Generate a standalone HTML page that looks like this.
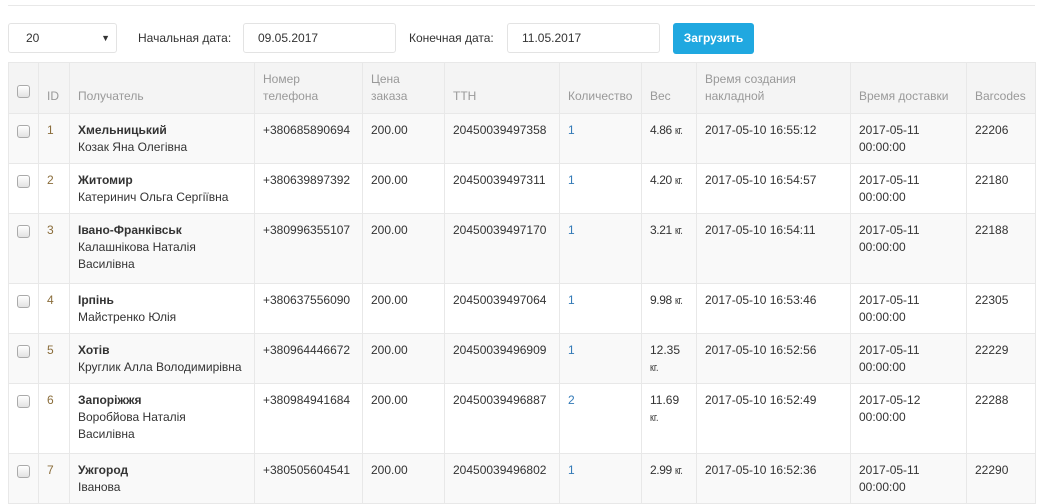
<!DOCTYPE html>
<html><head><meta charset="utf-8"><style>
body{margin:0;background:#fff;font-family:"Liberation Sans",Arial,sans-serif;font-size:12px;color:#333;width:1045px;height:468px;overflow:hidden;position:relative}
.hr{position:absolute;left:8px;top:5px;width:1027px;height:1px;background:#e8e8e8}
.ctl{position:absolute;top:23px;height:30px;box-sizing:border-box;border:1px solid #e3e3e3;border-radius:3px;line-height:28px;padding-left:16px;font-size:12px}
.lbl{position:absolute;top:23px;line-height:30px}
.btn{position:absolute;left:673px;top:23px;width:81px;height:31px;background:#20a8e0;color:#fff;border-radius:3px;line-height:31px;text-align:center;font-weight:bold;font-size:12px}
table{position:absolute;left:8px;top:62px;border-collapse:collapse;table-layout:fixed;width:1027px}
td,th{border:1px solid #e8e8e8;padding:8px 8px 0 8px;vertical-align:top;line-height:17px;text-align:left;font-weight:normal}
th{color:#999;background:#f4f4f4;vertical-align:bottom;padding-bottom:8px;height:34px}
tr.o td{background:#f9f9f9}
.cb{display:inline-block;width:11px;height:11px;border:1px solid #aaa;border-radius:3px;background:linear-gradient(#fff,#e2e2e2);margin-top:3px}
th .cb{margin-bottom:2px}
.id{color:#8a6d3b}.q{color:#337ab7}
td.w{padding-left:8px;padding-right:0;letter-spacing:-0.4px;white-space:nowrap}
.k{font-size:11px;transform:scaleX(.8);display:inline-block;transform-origin:left}
b{font-weight:bold}
</style></head><body>
<div class="hr"></div>
<div class="ctl" style="left:8px;width:109px;padding-left:17px">20<span style="position:absolute;right:6px;font-size:9px">▼</span></div>
<div class="lbl" style="left:138px">Начальная дата:</div>
<div class="ctl" style="left:243px;width:153px;padding-left:14px">09.05.2017</div>
<div class="lbl" style="left:409px">Конечная дата:</div>
<div class="ctl" style="left:507px;width:153px;padding-left:14px">11.05.2017</div>
<div class="btn">Загрузить</div>
<table>
<colgroup><col style="width:30px"><col style="width:31px"><col style="width:185px"><col style="width:108px"><col style="width:82px"><col style="width:115px"><col style="width:82px"><col style="width:55px"><col style="width:154px"><col style="width:116px"><col style="width:69px"></colgroup>
<tr><th><span class="cb"></span></th><th>ID</th><th>Получатель</th><th>Номер телефона</th><th>Цена заказа</th><th>ТТН</th><th>Количество</th><th>Вес</th><th>Время создания накладной</th><th>Время доставки</th><th>Barcodes</th></tr>
<tr class="o" style="height:50px"><td><span class="cb"></span></td><td class="id">1</td><td><b>Хмельницький</b><br>Козак Яна Олегівна</td><td>+380685890694</td><td>200.00</td><td>20450039497358</td><td class="q">1</td><td class="w">4.86 <span class="k">кг.</span></td><td>2017-05-10 16:55:12</td><td>2017-05-11 00:00:00</td><td>22206</td></tr>
<tr style="height:50px"><td><span class="cb"></span></td><td class="id">2</td><td><b>Житомир</b><br>Катеринич Ольга Сергіївна</td><td>+380639897392</td><td>200.00</td><td>20450039497311</td><td class="q">1</td><td class="w">4.20 <span class="k">кг.</span></td><td>2017-05-10 16:54:57</td><td>2017-05-11 00:00:00</td><td>22180</td></tr>
<tr class="o" style="height:70px"><td><span class="cb"></span></td><td class="id">3</td><td><b>Івано-Франківськ</b><br>Калашнікова Наталія Василівна</td><td>+380996355107</td><td>200.00</td><td>20450039497170</td><td class="q">1</td><td class="w">3.21 <span class="k">кг.</span></td><td>2017-05-10 16:54:11</td><td>2017-05-11 00:00:00</td><td>22188</td></tr>
<tr style="height:50px"><td><span class="cb"></span></td><td class="id">4</td><td><b>Ірпінь</b><br>Майстренко Юлія</td><td>+380637556090</td><td>200.00</td><td>20450039497064</td><td class="q">1</td><td class="w">9.98 <span class="k">кг.</span></td><td>2017-05-10 16:53:46</td><td>2017-05-11 00:00:00</td><td>22305</td></tr>
<tr class="o" style="height:50px"><td><span class="cb"></span></td><td class="id">5</td><td><b>Хотів</b><br>Круглик Алла Володимирівна</td><td>+380964446672</td><td>200.00</td><td>20450039496909</td><td class="q">1</td><td>12.35<br><span class="k">кг.</span></td><td>2017-05-10 16:52:56</td><td>2017-05-11 00:00:00</td><td>22229</td></tr>
<tr style="height:70px"><td><span class="cb"></span></td><td class="id">6</td><td><b>Запоріжжя</b><br>Воробйова Наталія<br>Василівна</td><td>+380984941684</td><td>200.00</td><td>20450039496887</td><td class="q">2</td><td>11.69<br><span class="k">кг.</span></td><td>2017-05-10 16:52:49</td><td>2017-05-12 00:00:00</td><td>22288</td></tr>
<tr class="o" style="height:50px"><td><span class="cb"></span></td><td class="id">7</td><td><b>Ужгород</b><br>Іванова</td><td>+380505604541</td><td>200.00</td><td>20450039496802</td><td class="q">1</td><td class="w">2.99 <span class="k">кг.</span></td><td>2017-05-10 16:52:36</td><td>2017-05-11 00:00:00</td><td>22290</td></tr>
</table>
</body></html>
